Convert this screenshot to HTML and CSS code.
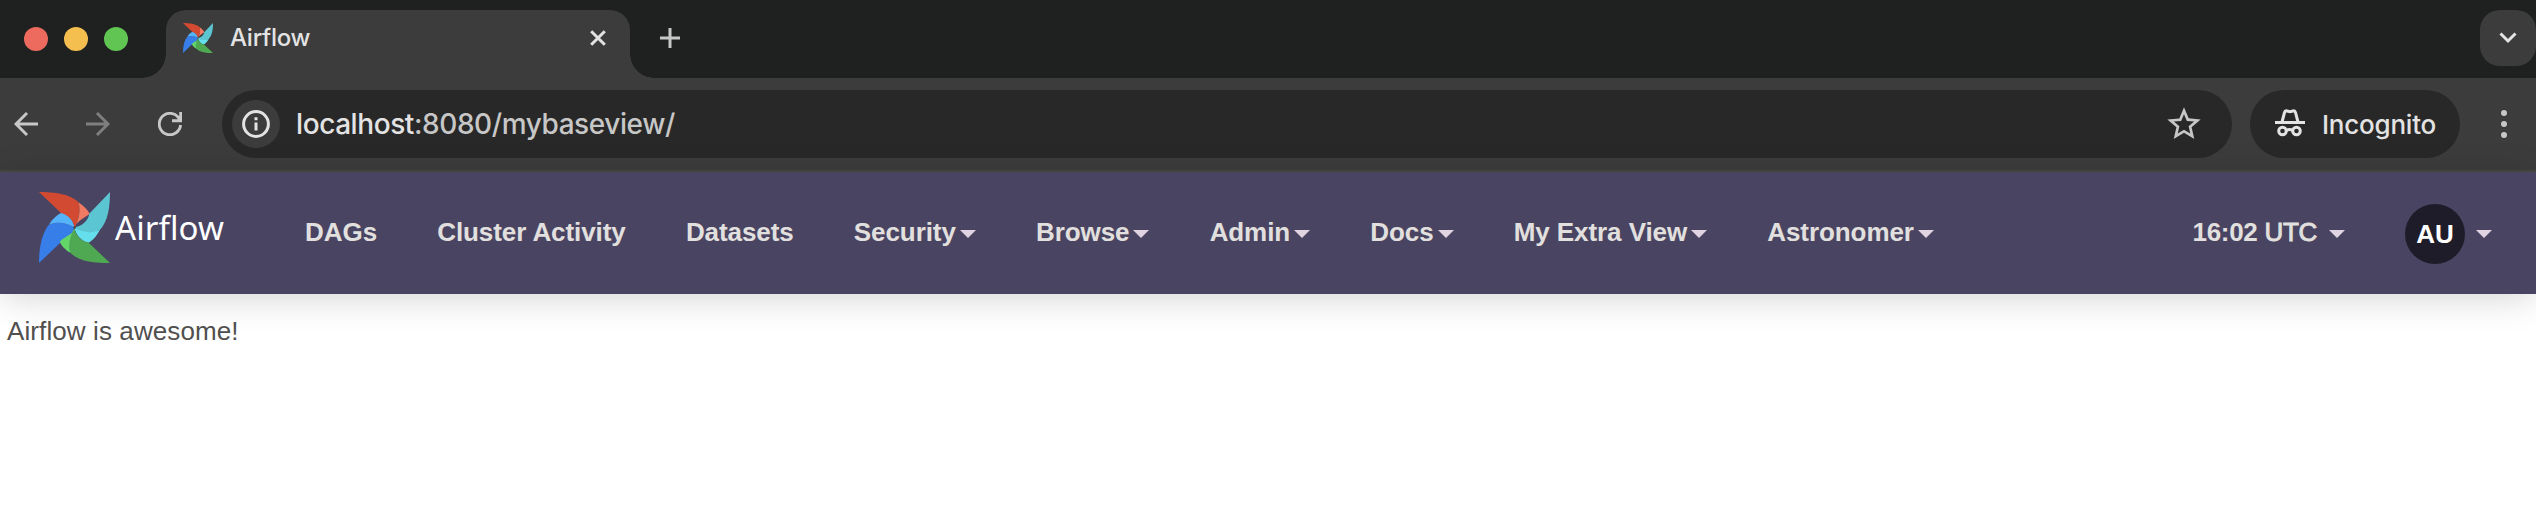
FILE: index.html
```html
<!DOCTYPE html>
<html lang="en">
<head>
<meta charset="utf-8">
<title>Airflow</title>
<link rel="stylesheet" href="styles.css">
</head>
<body>
<svg width="0" height="0" class="defs" aria-hidden="true">
  <symbol id="pinwheel" viewBox="0 0 70 70">
    <path fill="#377ee9" d="M0 70 22 49C27 48 34 41 35 35 27 30 18 29 10 32 3 40 0 55 0 70Z"/>
    <path fill="#55b3fa" d="M35 35C34 27 27 21 22 20.500C17 23 13 27 10 32 18 29 27 30 35 35Z"/>
    <path fill="#d34a32" d="M0 0 22 21C28 22 34 28 35 35 40 26 41 17 39 10 31 2 15 0 0 0Z"/>
    <path fill="#f07b62" d="M35 35C37 29 44 26 50 21.500 48 17 43 13 39 10 41 17 40 26 35 35Z"/>
    <path fill="#5cc5d2" d="M70 0 49.500 21.500C49 28 42 34 35 35 43 41 53 42 60 37.500 68 29 70 15 70 0Z"/>
    <path fill="#66dfec" d="M35 35C36 42 42 49 49 50 53 48 57 43 60 37.500 52 41 43 40 35 35Z"/>
    <path fill="#4fa952" d="M70 70 49 50C42 49 36 43 35 36 29 44 29 54 31 60 40 69 55 70 70 70Z"/>
    <path fill="#63d669" d="M35 36C34 42 26 43 20.500 49 22 53 26 57 31 60 29 53 30 44 35 36Z"/>
    <circle cx="35" cy="35" r="1.300" fill="#4a4848"/>
  </symbol>
</svg>

<header class="tabstrip">
  <div class="lights"><i class="light red"></i><i class="light yellow"></i><i class="light green"></i></div>
  <div class="tab">
    <svg class="favicon"><use href="#pinwheel"/></svg>
    <span class="tab-title">Airflow</span>
    <svg class="close" viewBox="0 0 16 16"><path d="M1.200 1.200 14.800 14.800M14.800 1.200 1.200 14.800"/></svg>
  </div>
  <svg class="new-tab" viewBox="0 0 20 20"><path d="M10 0V20M0 10H20"/></svg>
  <button class="tab-search"><svg viewBox="0 0 18 12"><path d="M1.500 1.500 9 9 16.500 1.500"/></svg></button>
</header>

<div class="toolbar">
  <svg class="nav-icon" viewBox="0 0 24 24"><path d="M24 12H2M13 1 2 12 13 23"/></svg>
  <svg class="nav-icon forward" viewBox="0 0 24 24"><path d="M0 12H22M11 1 22 12 11 23"/></svg>
  <svg class="nav-icon reload" viewBox="0 0 24 24"><path d="M22.600 13A10.700 10.700 0 1 1 20 5L22 8M22.700 0V8.800H14"/></svg>
  <div class="omnibox">
    <span class="site-info"><svg viewBox="0 0 28 28"><circle cx="14" cy="14" r="12.400"/><path d="M14 12.500V20.500M14 7.300V10.300"/></svg></span>
    <span class="url"><b>localhost</b>:8080/mybaseview/</span>
    <svg class="star" viewBox="0 0 24 24"><path fill-rule="evenodd" d="M22 9.240l-7.190-.620L12 2 9.190 8.630 2 9.240l5.460 4.730L5.820 21 12 17.270 18.180 21l-1.630-7.030ZM12 15.400l-3.760 2.270 1-4.280-3.320-2.880 4.380-.380L12 6.100l1.710 4.040 4.380.380-3.320 2.880 1 4.280Z"/></svg>
  </div>
  <div class="incognito">
    <svg viewBox="0 0 30 28"><path d="M0 13.500H30M7 13 9.500 3.500Q10 1.500 12 2L15 2.700 18 2Q20 1.500 20.500 3.500L23 13"/><circle cx="7.500" cy="22" r="3.800"/><circle cx="21.500" cy="22" r="3.800"/><path d="M11 21.500Q14.500 19.500 18 21.500"/></svg>
    <span>Incognito</span>
  </div>
  <svg class="kebab" viewBox="0 0 6 28"><circle cx="3" cy="3" r="3"/><circle cx="3" cy="14" r="3"/><circle cx="3" cy="25" r="3"/></svg>
</div>

<nav class="navbar">
  <a class="brand"><svg class="logo"><use href="#pinwheel"/></svg><span>Airflow</span></a>
  <ul class="menu">
    <li>DAGs</li>
    <li>Cluster Activity</li>
    <li>Datasets</li>
    <li>Security<i class="caret"></i></li>
    <li>Browse<i class="caret"></i></li>
    <li>Admin<i class="caret"></i></li>
    <li>Docs<i class="caret"></i></li>
    <li>My Extra View<i class="caret"></i></li>
    <li>Astronomer<i class="caret"></i></li>
  </ul>
  <div class="clock"><span>16:02 <span class="zone">UTC</span></span><i class="caret"></i></div>
  <div class="user"><span class="avatar">AU</span><i class="caret"></i></div>
</nav>

<main>Airflow is awesome!</main>
</body>
</html>
```
FILE: styles.css
```css
* { box-sizing: border-box; }
body { margin: 0; height: 522px; overflow: hidden; background: #fff; font-family: "Liberation Sans", Arial, sans-serif; }
svg { display: block; flex: none; fill: none; }
.defs { position: absolute; }

.tabstrip { display: flex; height: 78px; padding: 10px 0 0 24px; background: #1f2120; font-family: Inter, sans-serif; }
.lights { display: flex; gap: 16px; width: 142px; padding-top: 17px; }
.light { width: 24px; height: 24px; border-radius: 50%; }
.red { background: #ed6a5e; }
.yellow { background: #f5bf4f; }
.green { background: #61c554; }

.tab { position: relative; display: flex; width: 464px; height: 68px; padding: 13px 24px 0 17px; border-radius: 20px 20px 0 0; background: #3c3c3c; }
.tab::before, .tab::after { content: ""; position: absolute; bottom: 0; width: 24px; height: 24px; }
.tab::before { left: -24px; background: radial-gradient(circle at 0 0, transparent 23.5px, #3c3c3c 24px); }
.tab::after { right: -24px; background: radial-gradient(circle at 100% 0, transparent 23.5px, #3c3c3c 24px); }
.favicon { width: 30px; height: 30px; }
.tab-title { margin-left: 17px; font-size: 24px; font-weight: 450; line-height: 30px; letter-spacing: -.25px; color: #e3e3e3; }
.close { width: 16px; height: 16px; margin: 7px 0 0 auto; stroke: #e3e3e3; stroke-width: 3; }
.new-tab { width: 20px; height: 20px; margin: 18px 0 0 30px; stroke: #c7c7c7; stroke-width: 3; }
.tab-search { display: flex; justify-content: center; align-items: center; width: 56px; height: 56px; margin-left: auto; padding: 0; border: 0; border-radius: 20px; background: #3c3c3c; }
.tab-search svg { width: 18px; height: 12px; stroke: #e3e3e3; stroke-width: 3; }

.toolbar { display: flex; align-items: center; height: 94px; padding: 0 29px 0 14px; border-bottom: 2px solid #474740; background: #3c3c3c; font-family: Inter, sans-serif; }
.nav-icon { width: 24px; height: 24px; margin-right: 48px; stroke: #c7c7c7; stroke-width: 2.900; }
.forward { stroke: #7f7f7f; }
.reload { margin-right: 40px; }
.omnibox { display: flex; align-items: center; width: 2010px; height: 68px; padding: 0 28px 0 10px; border-radius: 34px; background: #282828; }
.site-info { display: flex; justify-content: center; align-items: center; width: 48px; height: 48px; border-radius: 50%; background: #3c3c3c; }
.site-info svg { width: 28px; height: 28px; stroke: #e3e3e3; stroke-width: 3; }
.url { margin-left: 16px; font-size: 28px; font-weight: 450; letter-spacing: -.42px; color: #c7c7c7; }
.url b { font-weight: 450; color: #e3e3e3; }
.star { width: 40px; height: 40px; margin-left: auto; fill: #c7c7c7; }
.incognito { display: flex; align-items: center; width: 210px; height: 68px; margin-left: 18px; padding-left: 25px; border-radius: 34px; background: #282828; color: #e3e3e3; font-size: 26px; font-weight: 450; letter-spacing: -.22px; }
.incognito span { padding-top: 1px; }
.incognito svg { width: 30px; height: 28px; margin: 0 17px 2px 0; stroke: #e3e3e3; stroke-width: 3; }
.kebab { width: 6px; height: 28px; margin-left: auto; fill: #c7c7c7; }

.navbar { position: relative; display: flex; height: 122px; padding-right: 44px; background: #4a4463; box-shadow: 0 5px 34px -2px rgba(0, 0, 0, .18); color: #e2e0de; font-size: 26px; font-weight: 700; line-height: 30px; }
.brand { display: flex; width: 275px; padding: 20px 0 0 39px; }
.logo { width: 71px; height: 71px; }
.brand span { margin-left: 5px; padding-top: 16px; font: 400 33px/40px "Noto Sans", sans-serif; letter-spacing: .1px; color: #fff; }
.menu { display: flex; margin: 0; padding: 0; list-style: none; letter-spacing: -.08px; }
.menu li { display: flex; padding: 45px 30.100px 0; white-space: nowrap; }
.caret { width: 0; height: 0; margin: 13px 0 0 4px; border: 8px solid transparent; border-top-color: #e0d4e2; border-bottom: 0; }
.clock { display: flex; margin-left: auto; padding-top: 45px; white-space: nowrap; letter-spacing: -.3px; }
.zone { font-weight: 400; -webkit-text-stroke: .9px #e2e0de; }
.clock .caret { margin-left: 12px; }
.user { display: flex; margin-left: 60px; padding-top: 32px; }
.user .caret { margin: 26px 0 0 11px; }
.avatar { width: 60px; height: 60px; border-radius: 50%; background: #1f1c2a; color: #fff; line-height: 60px; text-align: center; }

main { padding: 22px 7px; color: #51504f; font-size: 26px; line-height: 30px; letter-spacing: .1px; }
```
